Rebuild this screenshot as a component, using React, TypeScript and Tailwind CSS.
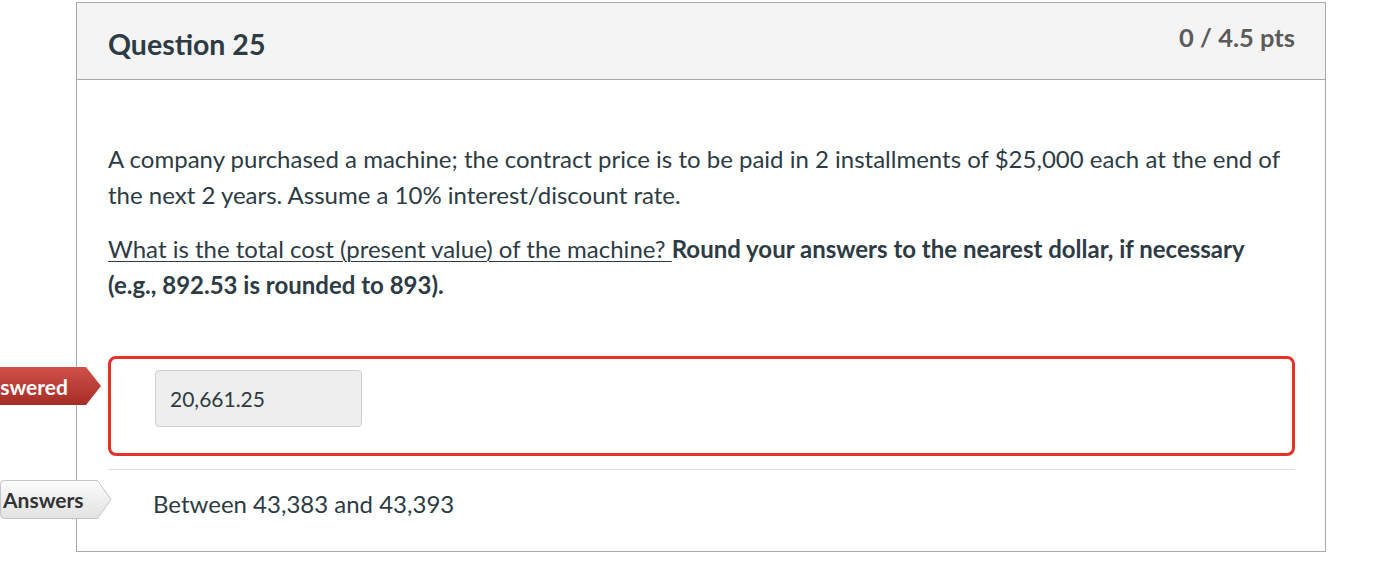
export default function App() {
  return (
    <div className="min-h-screen bg-white pt-[2px] pl-[76px] font-['Lato','Liberation_Sans',sans-serif] text-[#2d3b45]">
      <div className="relative w-[1250px] h-[550px] border border-[#a9a9a9]">
        {/* header */}
        <div className="flex justify-between items-start h-[77px] bg-[#f4f4f4] border-b border-[#a9a9a9] pl-[31px] pr-[30px]">
          <h2 className="mt-[24px] text-[28.5px] leading-[34px] font-bold">Question 25</h2>
          <div className="mt-[18px] text-[25.5px] leading-[32px] font-bold text-[#5b5b5b]">0 / 4.5 pts</div>
        </div>

        {/* body */}
        <div className="pl-[31px] pr-[30px] pt-[61px]">
          <p className="text-[24px] leading-[36px]">
            A company purchased a machine; the contract price is to be paid in 2 installments of $25,000 each at the end of
            the next 2 years. Assume a 10% interest/discount rate.
          </p>
          <p className="mt-[18px] text-[24px] leading-[36px]">
            <span className="underline underline-offset-[3px] decoration-1">What is the total cost (present value) of the machine? </span>
            <strong>
              Round your answers to the nearest dollar, if necessary (e.g., 892.53 is rounded to 893).
            </strong>
          </p>

          {/* your answer */}
          <div className="relative mt-[53px]">
            <div className="absolute left-[-167px] top-[11px] flex items-center h-[38px]">
              <svg className="absolute inset-0" width="160" height="38" viewBox="0 0 160 38">
                <defs>
                  <linearGradient id="redTag" x1="0" y1="0" x2="0" y2="1">
                    <stop offset="0" stopColor="#d0514a" />
                    <stop offset="1" stopColor="#a52d26" />
                  </linearGradient>
                </defs>
                <polygon points="0,0 145,0 160,19 145,38 0,38" fill="url(#redTag)" />
              </svg>
              <span className="relative w-[160px] pr-[33px] pt-[2px] text-right text-[21px] font-bold text-white">
                Unanswered
              </span>
            </div>
            <div className="h-[100px] rounded-[8px] border-[3px] border-[#e8302a] pt-[11px] pl-[44px]">
              <div className="w-[207px] h-[57px] rounded-[4px] border border-[#cfcfcf] bg-[#eeeeee] flex items-center pl-[14px] text-[21px]">
                20,661.25
              </div>
            </div>
          </div>

          <div className="mt-[13px] border-t border-[#dddddd]" />

          {/* correct answers */}
          <div className="relative h-[66px] flex items-center pl-[45px] pt-[2px]">
            <div className="absolute left-[-108px] top-[10px] flex items-center h-[39px]">
              <svg className="absolute inset-0" width="112" height="39" viewBox="0 0 112 39">
                <defs>
                  <linearGradient id="grayTag" x1="0" y1="0" x2="0" y2="1">
                    <stop offset="0" stopColor="#fbfbfb" />
                    <stop offset="1" stopColor="#e2e2e2" />
                  </linearGradient>
                </defs>
                <path d="M4.5,0.5 H97.5 L111,19.5 L97.5,38.5 H4.5 Q0.5,38.5 0.5,34.5 V4.5 Q0.5,0.5 4.5,0.5 Z" fill="url(#grayTag)" stroke="#c4c4c4" />
              </svg>
              <span className="relative w-[112px] pl-[3px] text-[21px] font-bold text-[#333333]">Answers</span>
            </div>
            <span className="text-[24px]">Between 43,383 and 43,393</span>
          </div>
        </div>
      </div>
    </div>
  );
}
